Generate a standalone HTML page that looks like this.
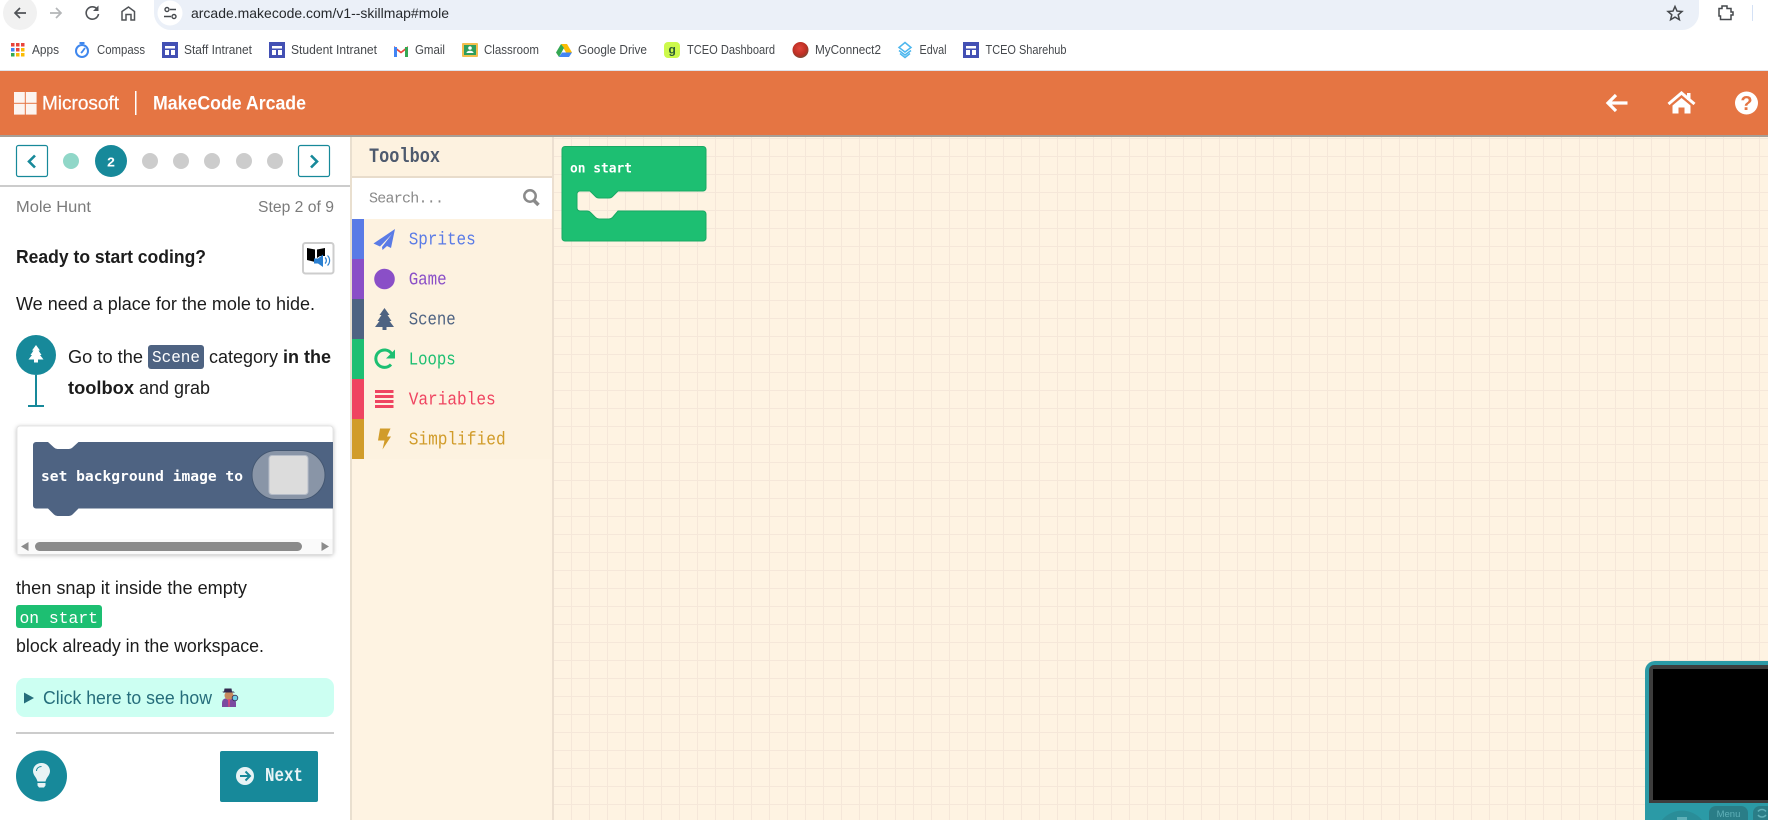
<!DOCTYPE html>
<html lang="en"><head><meta charset="utf-8"><title>MakeCode Arcade</title>
<style>
html,body{margin:0;padding:0;background:#fff;width:1768px;height:820px;overflow:hidden}
svg{display:block;position:absolute;left:0;top:0;overflow:hidden}
text{font-family:"Liberation Sans",sans-serif;white-space:pre}
.m{font-family:"Liberation Mono",monospace}
.d{font-family:"DejaVu Sans Mono",monospace;font-weight:bold}
.bm{font-size:12.500px;fill:#45484c}
.b{font-size:18px;fill:#1c1c1c}
.bb{font-size:18px;fill:#1c1c1c;font-weight:bold}
.tb{font-size:18px}
</style></head><body>
<svg width="1768" height="820" viewBox="0 0 1768 820" xmlns="http://www.w3.org/2000/svg">
<defs>
<pattern id="g" x="13" y="12" width="18" height="18" patternUnits="userSpaceOnUse">
<rect width="18" height="18" fill="#fef3e2"/><rect width="1" height="18" fill="#f5e7d9"/><rect width="18" height="1" fill="#f5e7d9"/>
</pattern>
<g id="win"><rect width="16" height="16" fill="#4350b4"/><rect x="3" y="4" width="10" height="2.500" fill="#fff"/><rect x="3" y="8" width="4" height="5" fill="#fff"/><rect x="9" y="8" width="4" height="5" fill="#fff"/></g>
<radialGradient id="ball" cx=".45" cy=".4" r=".6"><stop offset="0" stop-color="#e0453a"/><stop offset=".7" stop-color="#bd2f24"/><stop offset="1" stop-color="#7d4a35"/></radialGradient>
</defs>

<!-- browser chrome -->
<rect width="1768" height="70" fill="#fff"/>
<rect y="70" width="1768" height="1" fill="#dfe3ea"/>
<path d="M154,0H1699V13a17,17 0 0 1 -17,17H171a17,17 0 0 1 -17,-17z" fill="#ebf0f8"/>
<path d="M9,0H31A17,17 0 1 1 9,0z" fill="#f1f1f1"/>
<path d="M26,13H15M20,8l-5,5l5,5" fill="none" stroke="#505357" stroke-width="1.700"/>
<path d="M50,13H61M56,8l5,5l-5,5" fill="none" stroke="#b4b6b8" stroke-width="1.700"/>
<path d="M97.500,9.500A6.200,6.200 0 1 0 98.500,14" fill="none" stroke="#505357" stroke-width="1.600"/><path d="M98.500,5.500V11H93z" fill="#505357"/>
<path d="M122,20V11.500L128.500,7L134.500,11.500V20H131V14.500H126V20z" fill="none" stroke="#505357" stroke-width="1.500"/>
<path d="M170,0.500a12.500,12.500 0 0 1 0,25a12.500,12.500 0 0 1 0,-25z" fill="#fff"/>
<g fill="none" stroke="#45484c" stroke-width="1.400"><circle cx="167" cy="9.500" r="2"/><path d="M170,9.500H176M164,16.500H171"/><circle cx="174" cy="16.500" r="2"/></g>
<text x="191" y="18" font-size="14" fill="#26292d" textLength="258" lengthAdjust="spacingAndGlyphs">arcade.makecode.com/v1--skillmap#mole</text>
<path d="M1675,6.500l2,4.600 5,.4 -3.800,3.300 1.200,4.900 -4.400,-2.600 -4.400,2.600 1.200,-4.900 -3.800,-3.300 5,-.4z" fill="none" stroke="#45484c" stroke-width="1.500"/>
<path d="M1719,9H1722V6.500H1727V9H1731V12.500H1733V15.500H1731V20H1720.500V16.500H1719z" fill="none" stroke="#45484c" stroke-width="1.500" transform="translate(0,-.5)"/>
<rect x="1752" y="5" width="1" height="16" fill="#d4e1f5"/>

<!-- bookmarks -->
<g>
<rect x="11" y="43" width="3.500" height="3.500" fill="#e8453c"/><rect x="16" y="43" width="3.500" height="3.500" fill="#e8453c"/><rect x="21" y="43" width="3.500" height="3.500" fill="#e8453c"/>
<rect x="11" y="48" width="3.500" height="3.500" fill="#4285f4"/><rect x="16" y="48" width="3.500" height="3.500" fill="#e8453c"/><rect x="21" y="48" width="3.500" height="3.500" fill="#fbbc05"/>
<rect x="11" y="53" width="3.500" height="3.500" fill="#34a853"/><rect x="16" y="53" width="3.500" height="3.500" fill="#fbbc05"/><rect x="21" y="53" width="3.500" height="3.500" fill="#fbbc05"/>
</g>
<text class="bm" x="32" y="54" textLength="27" lengthAdjust="spacingAndGlyphs">Apps</text>
<circle cx="82" cy="51" r="6" fill="none" stroke="#3f87ee" stroke-width="2"/><rect x="79.500" y="42" width="5" height="2" fill="#3f87ee"/><path d="M85,48L82,52L81,53" stroke="#3f87ee" stroke-width="1.800" fill="none"/>
<text class="bm" x="97" y="54" textLength="48" lengthAdjust="spacingAndGlyphs">Compass</text>
<use href="#win" x="162" y="42"/>
<text class="bm" x="184" y="54" textLength="68" lengthAdjust="spacingAndGlyphs">Staff Intranet</text>
<use href="#win" x="269" y="42"/>
<text class="bm" x="291" y="54" textLength="86" lengthAdjust="spacingAndGlyphs">Student Intranet</text>
<path d="M394,57V46L401,51.500L408,46V57H405V50.500L401,53.500L397,50.500V57z" fill="#e8453c"/><rect x="394" y="47" width="3" height="10" fill="#4285f4"/><rect x="405" y="47" width="3" height="10" fill="#34a853"/>
<text class="bm" x="415" y="54" textLength="30" lengthAdjust="spacingAndGlyphs">Gmail</text>
<rect x="462" y="43" width="16" height="14" rx="1" fill="#f3be4e"/><rect x="464" y="45" width="12" height="10" fill="#2f9e5c"/><circle cx="470" cy="48" r="1.800" fill="#fff"/><path d="M466.500,53c0,-3 7,-3 7,0z" fill="#fff"/>
<text class="bm" x="484" y="54" textLength="55" lengthAdjust="spacingAndGlyphs">Classroom</text>
<path d="M561,44H567L572,52.500H566z" fill="#fbbc05"/><path d="M561,44L556,52.500L559,57L564,48z" fill="#34a853"/><path d="M559,57H569L572,52.500H562z" fill="#4285f4"/>
<text class="bm" x="578" y="54" textLength="69" lengthAdjust="spacingAndGlyphs">Google Drive</text>
<rect x="664" y="42" width="16" height="16" rx="4" fill="#ccf94b"/><text x="668.500" y="53.500" font-size="12" font-weight="bold" fill="#2c5c33">g</text>
<text class="bm" x="687" y="54" textLength="88" lengthAdjust="spacingAndGlyphs">TCEO Dashboard</text>
<circle cx="800.500" cy="50" r="8" fill="url(#ball)"/>
<text class="bm" x="815" y="54" textLength="66" lengthAdjust="spacingAndGlyphs">MyConnect2</text>
<g fill="none" stroke="#4db7ee" stroke-width="1.500"><path d="M905,42.500L911,47.500L905,52L899,47.500z"/><path d="M899,50.500L905,55L911,50.500M900,53.500L905,57.500L910,53.500"/></g>
<text class="bm" x="919.500" y="54" textLength="27" lengthAdjust="spacingAndGlyphs">Edval</text>
<use href="#win" x="963" y="42"/>
<text class="bm" x="985.500" y="54" textLength="81" lengthAdjust="spacingAndGlyphs">TCEO Sharehub</text>

<!-- header -->
<rect y="71" width="1768" height="64" fill="#e57543"/>
<rect y="135" width="1768" height="2" fill="#a79f97"/>
<g fill="#fff" opacity=".92"><rect x="14" y="92" width="10.800" height="10.800"/><rect x="25.800" y="92" width="10.800" height="10.800"/><rect x="14" y="103.800" width="10.800" height="10.800"/><rect x="25.800" y="103.800" width="10.800" height="10.800"/></g>
<text x="42" y="109.500" font-size="19.500" fill="#fff" stroke="#fff" stroke-width=".25" textLength="77" lengthAdjust="spacingAndGlyphs">Microsoft</text>
<rect x="135" y="91" width="1.500" height="24" fill="#fff"/>
<text x="153" y="109.500" font-size="19" font-weight="bold" fill="#fff" textLength="153" lengthAdjust="spacingAndGlyphs">MakeCode Arcade</text>
<path d="M1627.500,103H1609M1616,95L1608,103L1616,111" fill="none" stroke="#fff" stroke-width="3.200"/>
<path d="M1668.500,104L1681.500,93L1694.500,104" fill="none" stroke="#fff" stroke-width="3"/><rect x="1687" y="93" width="3.500" height="7" fill="#fff"/>
<path d="M1672.500,105.500L1681.500,98L1690.500,105.500V113.500H1684.500V107.500H1678.500V113.500H1672.500z" fill="#fff"/>
<circle cx="1746.500" cy="103" r="11.500" fill="#fff"/>
<text x="1746.500" y="110" text-anchor="middle" font-size="20" font-weight="bold" fill="#e57543">?</text>

<!-- workspace -->
<rect x="352" y="137" width="1416" height="683" fill="url(#g)"/>
<!-- left panel -->
<rect x="0" y="137" width="350" height="683" fill="#fff"/>
<rect x="350" y="137" width="2" height="683" fill="#e9dfcf"/>
<g fill="#fff" stroke="#17899a" stroke-width="1.200"><rect x="16.500" y="145.500" width="31" height="31" rx="2"/><rect x="298.500" y="145.500" width="31" height="31" rx="2"/></g>
<path d="M35,155.500L29,161.500L35,167.500" fill="none" stroke="#17899a" stroke-width="2.600"/>
<path d="M311,155.500L317,161.500L311,167.500" fill="none" stroke="#17899a" stroke-width="2.600"/>
<circle cx="71" cy="161" r="8" fill="#90d7c8"/>
<circle cx="111" cy="161" r="16" fill="#17899a"/>
<text x="111" y="166.500" text-anchor="middle" font-size="14" font-weight="bold" fill="#fff" class="m">2</text>
<g fill="#cccccc"><circle cx="150" cy="161" r="8"/><circle cx="181" cy="161" r="8"/><circle cx="212" cy="161" r="8"/><circle cx="244" cy="161" r="8"/><circle cx="275" cy="161" r="8"/></g>
<rect x="0" y="185" width="350" height="2" fill="#cccccc"/>
<text x="16" y="212" font-size="15.500" fill="#7b7b7b" textLength="75" lengthAdjust="spacingAndGlyphs">Mole Hunt</text>
<text x="258" y="212" font-size="15.500" fill="#7b7b7b" textLength="76" lengthAdjust="spacingAndGlyphs">Step 2 of 9</text>
<text class="bb" x="16" y="263" textLength="190" lengthAdjust="spacingAndGlyphs">Ready to start coding?</text>
<rect x="303" y="243" width="30.500" height="30.500" rx="2.500" fill="#fff" stroke="#cdcdcd" stroke-width="2"/>
<path d="M307,248L315,249.500V262L307,260zM317,249.500L325,248V256H320L317,258z" fill="#000"/>
<path d="M314,258.500H318L323,254.500V267L318,263.500H314z" fill="#2a7fd0"/>
<path d="M325,257.500a4,4 0 0 1 0,6M327.500,255.500a7,7 0 0 1 0,10" fill="none" stroke="#2a7fd0" stroke-width="1.200"/>
<text class="b" x="16" y="310" textLength="299" lengthAdjust="spacingAndGlyphs">We need a place for the mole to hide.</text>
<circle cx="36" cy="355" r="20" fill="#17899a"/>
<path d="M36,345l4,5.500h-1.500l3,4.500h-1.500l3.500,4.500h-5.500v3h-4v-3h-5.500l3.500,-4.500h-1.500l3,-4.500h-1.500z" fill="#fff"/>
<rect x="35" y="375" width="2" height="30" fill="#17899a"/><rect x="28" y="405" width="16" height="2" fill="#17899a"/>
<text class="b" x="68" y="363" textLength="75" lengthAdjust="spacingAndGlyphs">Go to the</text>
<rect x="148" y="345" width="56" height="24" rx="3" fill="#4e6382"/>
<text class="m" x="152" y="362" font-size="17" fill="#fff" textLength="48" lengthAdjust="spacingAndGlyphs">Scene</text>
<text class="b" x="209" y="363" textLength="69" lengthAdjust="spacingAndGlyphs">category</text>
<text class="bb" x="283" y="363" textLength="48" lengthAdjust="spacingAndGlyphs">in the</text>
<text class="bb" x="68" y="394" textLength="66" lengthAdjust="spacingAndGlyphs">toolbox</text>
<text class="b" x="139" y="394" textLength="71" lengthAdjust="spacingAndGlyphs">and grab</text>

<!-- block card -->
<rect x="17" y="426" width="316" height="128" rx="3" fill="#fff" stroke="#e4e4e4" stroke-width="1" style="filter:drop-shadow(0 1px 2px rgba(0,0,0,.25))"/>
<path d="M36,442H48L54,447.500Q55.500,449 57.500,449H69Q71,449 72.500,447.500L78.500,442H333V508.500H78.500L72.500,514.500Q71,516 69,516H57.500Q55.500,516 54,514.500L48,508.500H36a3,3 0 0 1 -3,-3V445a3,3 0 0 1 3,-3z" fill="#4e6382"/>
<text class="d" x="41" y="481" font-size="14.600" fill="#fff" textLength="202" lengthAdjust="spacingAndGlyphs">set background image to</text>
<rect x="252" y="450.500" width="73" height="49" rx="24.500" fill="#8995a7" stroke="#445771" stroke-width="1"/>
<rect x="269" y="455.500" width="39" height="39" rx="3" fill="#dcdcdc" stroke="#b6bdc8" stroke-width="1"/>
<rect x="17.500" y="539" width="315" height="15" fill="#fafafa"/>
<rect x="35" y="542" width="267" height="9" rx="4.500" fill="#8b8b8b"/>
<path d="M28.500,542V551L21,546.500z" fill="#8b8b8b"/><path d="M321.500,542V551L329,546.500z" fill="#8b8b8b"/>

<text class="b" x="16" y="594" textLength="231" lengthAdjust="spacingAndGlyphs">then snap it inside the empty</text>
<rect x="16" y="605" width="86" height="23" rx="3" fill="#1dbf72"/>
<text class="m" x="19.500" y="623" font-size="17" fill="#fff" textLength="78.500" lengthAdjust="spacingAndGlyphs">on start</text>
<text class="b" x="16" y="652" textLength="248" lengthAdjust="spacingAndGlyphs">block already in the workspace.</text>
<rect x="16" y="678" width="318" height="39" rx="9" fill="#ccfff2"/>
<path d="M24,692.500L34,698L24,703.500z" fill="#256d7b"/>
<text x="43" y="704" font-size="18" fill="#256d7b" textLength="169" lengthAdjust="spacingAndGlyphs">Click here to see how</text>
<!-- detective emoji -->
<path d="M222,707v-4c0,-4 3,-5 7,-5s7,1 7,5v4z" fill="#7b4aa0"/>
<circle cx="229" cy="695.500" r="4.500" fill="#c68a5e"/>
<path d="M223,692.500h12l-1.500,-1h-1.500l-.5,-3h-7l-.5,3h-1.500z" fill="#35294f"/>
<path d="M228,699h2l-.5,8h-1z" fill="#e24a74"/>
<circle cx="235" cy="698" r="2.800" fill="#6fd0e8" stroke="#35294f" stroke-width=".8"/>
<rect x="16" y="732" width="318" height="2" fill="#cccccc"/>
<circle cx="41.500" cy="776" r="25.500" fill="#17899a"/>
<path d="M41.500,763c-5,0 -8.500,3.800 -8.500,8c0,4.500 3.500,6 4.500,10.500h8c1,-4.500 4.500,-6 4.500,-10.500c0,-4.200 -3.500,-8 -8.500,-8z" fill="#e8f3f5"/>
<path d="M37.500,783h8v2.500l-1.500,2h-5l-1.500,-2z" fill="#e8f3f5"/>
<path d="M36.500,771c0,-2.500 2,-4.500 5,-4.500" fill="none" stroke="#17899a" stroke-width="1"/>
<rect x="220" y="751" width="98" height="51" rx="2" fill="#17899a"/>
<circle cx="245" cy="776" r="9" fill="#e8f3f5"/>
<path d="M240,776H249M245.500,771.500L250,776L245.500,780.500" fill="none" stroke="#17899a" stroke-width="2"/>
<text class="m" x="265" y="781" font-size="19" font-weight="bold" fill="#e8f3f5" textLength="38" lengthAdjust="spacingAndGlyphs">Next</text>

<!-- toolbox -->
<rect x="352" y="137" width="200" height="283" fill="#fdf2e0"/>
<rect x="552" y="137" width="2" height="683" fill="#ecdfd0"/>
<rect x="352" y="420" width="200" height="400" fill="#fef3e2"/>
<rect x="352" y="176" width="200" height="2" fill="#e8dccb"/>
<text class="m" x="369" y="162" font-size="20" font-weight="bold" fill="#4e5a6e" textLength="71" lengthAdjust="spacingAndGlyphs">Toolbox</text>
<rect x="352" y="178" width="200" height="41" fill="#fff"/>
<text class="m" x="369" y="202.500" font-size="15" fill="#8a8a8a" textLength="75" lengthAdjust="spacing">Search...</text>
<circle cx="530" cy="196" r="5.700" fill="none" stroke="#8a8a8a" stroke-width="2.500"/><path d="M534,200.500L538.500,205" stroke="#8a8a8a" stroke-width="3.500"/>
<rect x="352" y="219" width="12" height="40" fill="#5a7be6"/>
<rect x="352" y="259" width="12" height="40" fill="#8a4fc7"/>
<rect x="352" y="299" width="12" height="40" fill="#4e6382"/>
<rect x="352" y="339" width="12" height="40" fill="#1dbf72"/>
<rect x="352" y="379" width="12" height="40" fill="#ef4561"/>
<rect x="352" y="419" width="12" height="40" fill="#d19c2a"/>
<rect x="364" y="419" width="188" height="40" fill="#fdf2e0"/>
<path d="M395,229L373.500,243.500L380,246.500L392,234L382,247L382.500,250L387,246L391,248z" fill="#5a7be6"/>
<circle cx="384.500" cy="279" r="10.300" fill="#8a4fc7"/>
<path d="M384.500,308l5,7h-2l4,6h-2l4.500,6h-7.500v3h-4v-3h-7.500l4.500,-6h-2l4,-6h-2z" fill="#4e6382"/>
<path d="M391,364.500A8.700,8.700 0 1 1 391.500,353.500" fill="none" stroke="#1dbf72" stroke-width="3"/><path d="M395,349.500V358.500H386z" fill="#1dbf72"/>
<g fill="#ef4561"><rect x="375" y="390" width="18.500" height="3"/><rect x="375" y="395" width="18.500" height="3"/><rect x="375" y="400" width="18.500" height="3"/><rect x="375" y="405" width="18.500" height="3"/></g>
<path d="M380,428.500H390.500L387,436.500H391L382.500,449.500L384.500,440.500H378z" fill="#d19c2a"/>
<text class="m tb" x="408.700" y="244.500" fill="#5a7be6" textLength="67" lengthAdjust="spacingAndGlyphs">Sprites</text>
<text class="m tb" x="408.700" y="284.500" fill="#8a4fc7" textLength="38" lengthAdjust="spacingAndGlyphs">Game</text>
<text class="m tb" x="408.700" y="324.500" fill="#4e6382" textLength="47" lengthAdjust="spacingAndGlyphs">Scene</text>
<text class="m tb" x="408.700" y="364.500" fill="#1dbf72" textLength="47" lengthAdjust="spacingAndGlyphs">Loops</text>
<text class="m tb" x="408.700" y="404.500" fill="#ef4561" textLength="87" lengthAdjust="spacingAndGlyphs">Variables</text>
<text class="m tb" x="408.700" y="444.500" fill="#d19c2a" textLength="97" lengthAdjust="spacingAndGlyphs">Simplified</text>

<!-- on start block -->
<path d="M565,146.500H703a3,3 0 0 1 3,3V188a3,3 0 0 1 -3,3H618L612.500,196.500Q611,198 609,198H599Q597,198 595.500,196.500L590,191H580a3,3 0 0 0 -3,3V208a3,3 0 0 0 3,3H587Q589,211 590.500,212.500L595.500,217.500Q597,219 599,219H609Q611,219 612.500,217.500L618,211H703a3,3 0 0 1 3,3V238a3,3 0 0 1 -3,3H565a3,3 0 0 1 -3,-3V149.500a3,3 0 0 1 3,-3z" fill="#1dbf72" stroke="#19a964" stroke-width="1"/>
<text class="d" x="570" y="172.500" font-size="13" fill="#fff" textLength="62" lengthAdjust="spacingAndGlyphs">on start</text>

<!-- simulator -->
<path d="M1768,661H1655a10,10 0 0 0 -10,10V820H1768z" fill="#2b9aa6"/>
<path d="M1768,665H1654a5,5 0 0 0 -5,5V803H1768z" fill="#3d3d3d"/>
<rect x="1653" y="669" width="115" height="131" fill="#000"/>
<path d="M1716,806H1741a7,7 0 0 1 7,7v7H1709v-7a7,7 0 0 1 7,-7z" fill="#2a7d87"/>
<text x="1728.500" y="817" text-anchor="middle" font-size="9.500" fill="#5fb0b8">Menu</text>
<path d="M1760,806H1768V820H1753v-7a7,7 0 0 1 7,-7z" fill="#2a7d87"/>
<path d="M1662,820a26,26 0 0 1 40,0z" fill="#2a8d98"/>
<rect x="1677" y="817" width="10" height="3" fill="#5fb0b8"/>
<path d="M1758,811.500a5,5 0 0 1 8,0M1766,815a5,5 0 0 1 -8,0" fill="none" stroke="#5fb0b8" stroke-width="1.500"/>
</svg>
</body></html>
